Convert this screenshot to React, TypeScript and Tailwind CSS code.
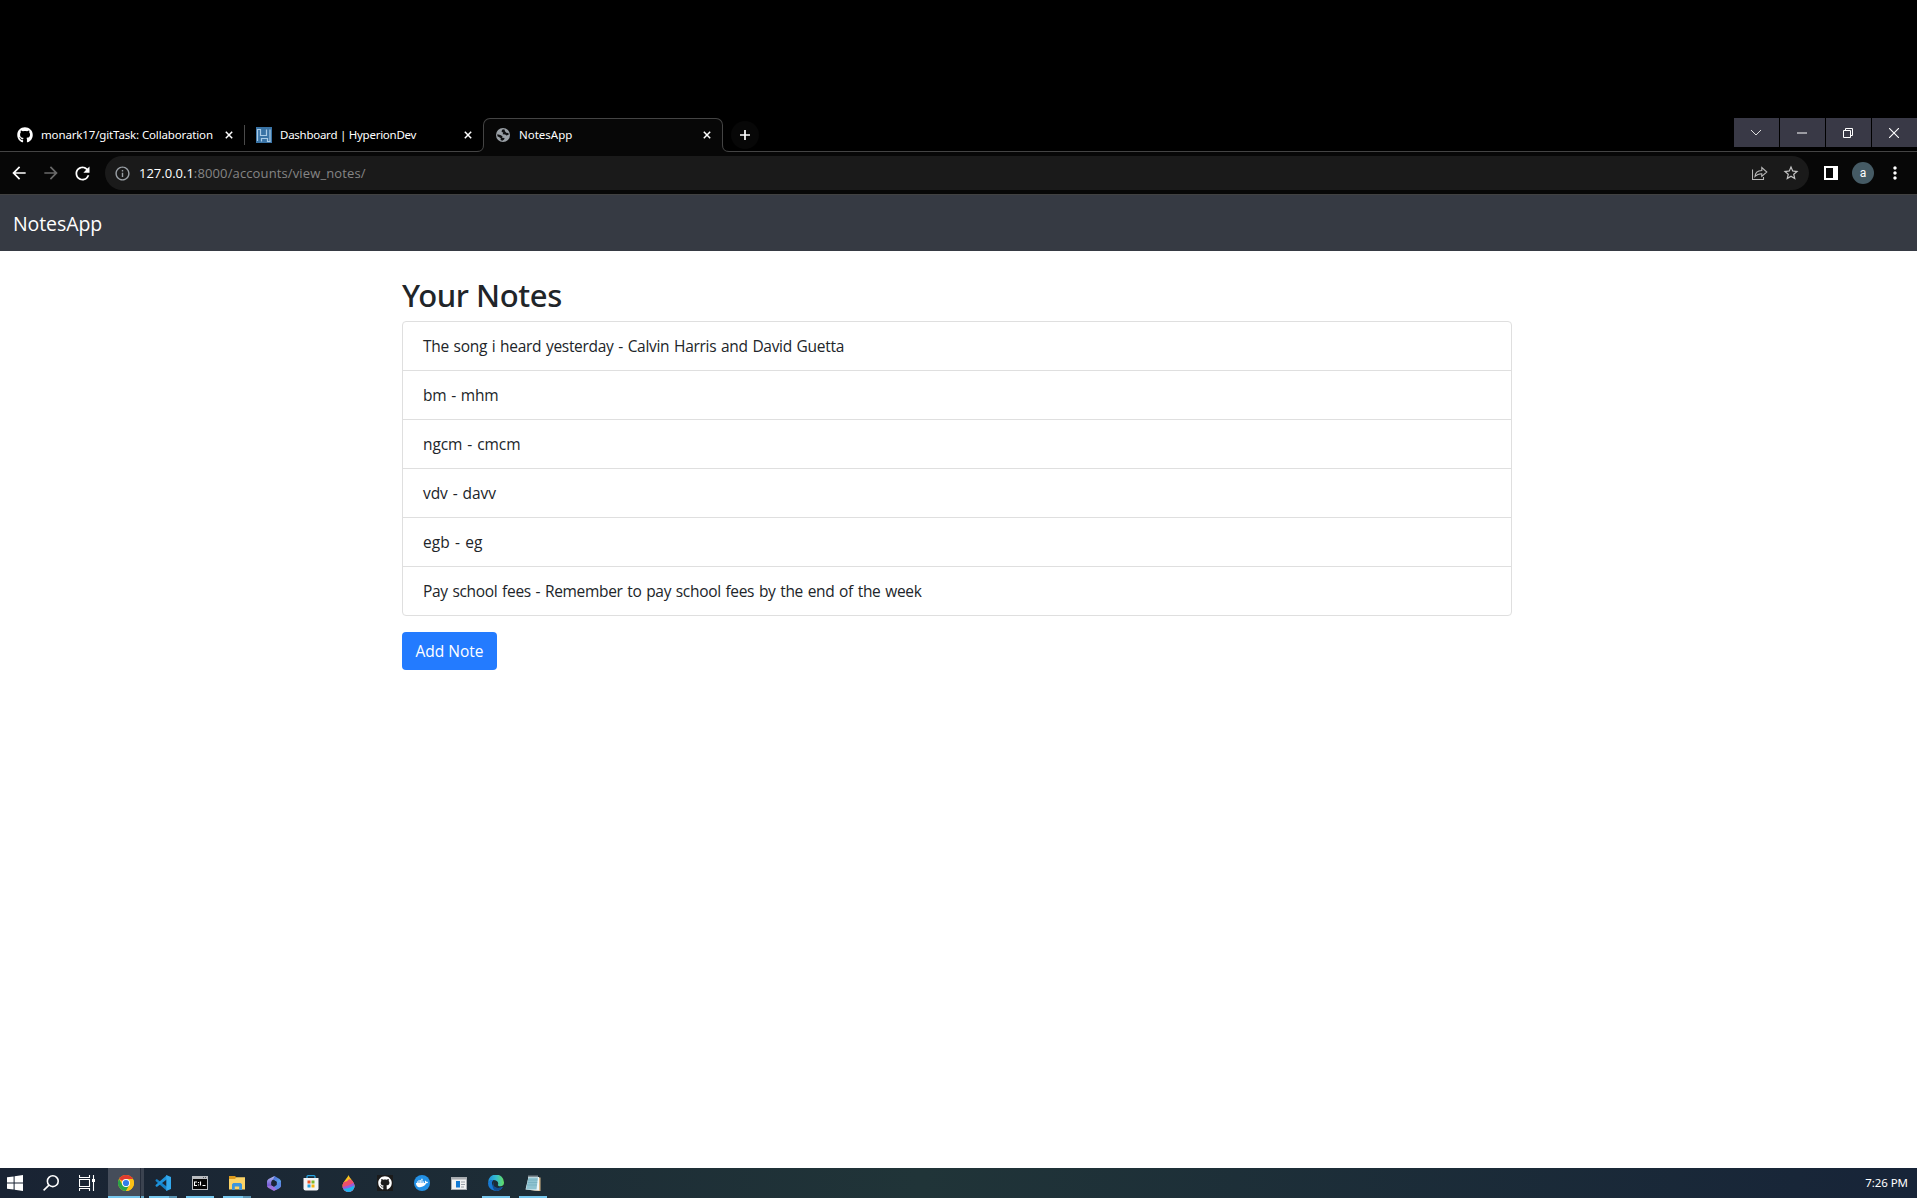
import React from 'react';
import { FaGithub, FaDocker } from 'react-icons/fa';
import {
  MdArrowBack,
  MdArrowForward,
  MdRefresh,
  MdInfoOutline,
  MdStarOutline,
  MdMoreVert,
} from 'react-icons/md';

const notes = [
  { text: 'The song i heard yesterday - Calvin Harris and David Guetta', spacing: 'tracking-[-0.3px]' },
  { text: 'bm - mhm', spacing: 'tracking-[-0.2px]' },
  { text: 'ngcm - cmcm', spacing: 'tracking-[-0.08px]' },
  { text: 'vdv - davv', spacing: 'tracking-[-0.08px]' },
  { text: 'egb - eg', spacing: 'tracking-[0.1px]' },
  {
    text: 'Pay school fees - Remember to pay school fees by the end of the week',
    spacing: 'tracking-[-0.32px]',
  },
];

function CloseX() {
  return (
    <svg width="8" height="8" viewBox="0 0 8 8" className="shrink-0 text-white">
      <path d="M0.8 0.8 7.2 7.2M7.2 0.8 0.8 7.2" stroke="currentColor" strokeWidth="1.5" />
    </svg>
  );
}

function HyperionIcon() {
  return (
    <svg width="16" height="16" viewBox="0 0 16 16" className="shrink-0">
      <rect width="16" height="16" fill="#3973a5" />
      <path
        d="M1.5 14V2.5H4.500V8.500H10.500V2.500M5.500 14.500V11.500H11.500V14.500H14V2.500"
        fill="none"
        stroke="#a9cbe6"
        strokeWidth="1.2"
      />
    </svg>
  );
}

function GlobeIcon() {
  return (
    <svg width="14" height="14" viewBox="0 0 14 14" className="shrink-0">
      <circle cx="7" cy="7" r="7" fill="#9aa0a6" />
      <path
        d="M8.3 1.3 6 1.8 5.6 4 7.3 4.6 6.6 6.2 9.2 6.5 10.4 7.6 12.7 6.8 12.4 5 10.3 4.7 9.2 3.4ZM1.3 6.2 4.4 7 6.5 8.3 6.1 9.8 8.6 10 8.1 11.4 6.3 12.7 4.5 11.9 4.8 10.2 2.9 9.1 1.4 8.2Z"
        fill="#101113"
      />
    </svg>
  );
}

function TabStrip() {
  return (
    <div className="flex h-[34px] bg-black text-white font-['Noto_Sans',sans-serif] text-[11.5px] leading-4">
      <div className="flex h-[34px] w-[483px] border-b border-[#444444]">
        <div className="flex h-[34px] w-[245px] items-center pl-[17px]">
          <FaGithub size={16} className="shrink-0" />
          <span className="ml-2 w-[176px] whitespace-nowrap tracking-[-0.14px]">
            monark17/gitTask: Collaboration
          </span>
          <span className="ml-2 flex">
            <CloseX />
          </span>
          <span className="ml-[11px] h-5 w-px bg-[#4a4a4a]" />
        </div>
        <div className="flex h-[34px] items-center pl-[11px]">
          <HyperionIcon />
          <span className="ml-2 w-[184px] whitespace-nowrap tracking-[-0.26px]">
            Dashboard | HyperionDev
          </span>
          <CloseX />
        </div>
      </div>
      <div className="relative flex h-[34px] w-[240px] items-center rounded-t-[7px] border border-b-0 border-[#444444] bg-[#070707] pb-px pl-3">
        <GlobeIcon />
        <span className="ml-[9px] w-[184px]">NotesApp</span>
        <CloseX />
        <svg width="7" height="7" viewBox="0 0 7 7" className="absolute bottom-0 -left-[7px]">
          <path d="M7 0v7H0V6.5Q6.5 6.5 6.5 0Z" fill="#070707" />
          <path d="M0 6.5Q6.5 6.5 6.5 0" fill="none" stroke="#444444" />
        </svg>
        <svg width="7" height="7" viewBox="0 0 7 7" className="absolute -right-[7px] bottom-0">
          <path d="M0 0v7H7V6.5Q0.5 6.5 0.5 0Z" fill="#070707" />
          <path d="M7 6.5Q0.5 6.5 0.5 0" fill="none" stroke="#444444" />
        </svg>
      </div>
      <div className="flex flex-1 justify-between border-b border-[#444444] pl-2">
        <div className="mt-[3px] flex size-7 items-center justify-center rounded-full bg-[#070707]">
          <svg width="10" height="10" viewBox="0 0 10 10">
            <path d="M5 0V10M0 5H10" stroke="white" strokeWidth="1.7" />
          </svg>
        </div>
        <div className="flex gap-px">
          {windowButtons.map((icon, i) => (
            <div key={i} className="flex h-[29px] w-[45px] items-center bg-[#393946] pl-[17px]">
              {icon}
            </div>
          ))}
        </div>
      </div>
    </div>
  );
}

const windowButtons = [
  <svg width="10" height="10" viewBox="0 0 10 10">
    <path d="M0 2 5 7 10 2" fill="none" stroke="#dddddd" strokeWidth="1" />
  </svg>,
  <svg width="10" height="10" viewBox="0 0 10 10">
    <path d="M0 5H10" stroke="white" strokeWidth="1" />
  </svg>,
  <svg width="10" height="10" viewBox="0 0 10 10">
    <path d="M0.5 2.5H7.5V9.5H0.5ZM2.5 2.5V0.5H9.5V7.5H7.5" fill="none" stroke="white" />
  </svg>,
  <svg width="10" height="10" viewBox="0 0 10 10">
    <path d="M0 0 10 10M10 0 0 10" stroke="white" strokeWidth="1.1" />
  </svg>,
];

function Toolbar() {
  return (
    <div className="flex h-[43px] items-center border-b border-[#414141] bg-[#070707] text-white font-['Open_Sans',sans-serif]">
      <MdArrowBack size={20} className="ml-[9px] shrink-0" />
      <MdArrowForward size={20} className="ml-3 shrink-0 text-[#6a6a6a]" />
      <MdRefresh size={21} className="ml-[11px] shrink-0" />
      <div className="ml-3 flex h-[34px] w-[1704px] items-center rounded-full bg-[#1a1a1a] pl-[9px] text-[13px] leading-5">
        <MdInfoOutline size={17} className="shrink-0 text-[#9aa0a6]" />
        <span className="ml-2">127.0.0.1</span>
        <span className="flex-1 tracking-[0.13px] text-[#858585]">:8000/accounts/view_notes/</span>
        <svg width="16" height="15" viewBox="0 0 16 15" className="mt-px">
          <path
            d="M0.5 3.5V13.5H11.5V11M3 10.5C3.2 6.8 5.5 4.7 9.8 4.5V1.5L14.8 6 9.8 10.4V7.7C6.6 7.6 4.7 8.6 3 10.5Z"
            fill="none"
            stroke="#b8b8b8"
            strokeWidth="1.1"
          />
        </svg>
        <MdStarOutline size={18} className="ml-[14px] mr-[9px] text-[#c4c4c4]" />
      </div>
      <div className="ml-[15px] h-[14px] w-[14px] border-2 border-r-[5px] border-white" />
      <div className="ml-[14px] flex size-[22px] items-center justify-center rounded-full bg-[#455a64] pb-px text-[12px] leading-none text-white font-['Roboto',sans-serif]">
        a
      </div>
      <MdMoreVert size={20} className="ml-[11px] shrink-0" />
    </div>
  );
}

function WindowsIcon() {
  return (
    <svg width="16" height="16" viewBox="0 0 16 16" fill="white">
      <path d="M0 2.3 6.6 1.4V7.5H0ZM7.6 1.2 16 0V7.5H7.6ZM0 8.5H6.6V14.6L0 13.7ZM7.6 8.5H16V16L7.6 14.8Z" />
    </svg>
  );
}

function SearchIcon() {
  return (
    <svg width="16" height="16" viewBox="0 0 16 16">
      <circle cx="9.8" cy="6.2" r="5.4" fill="none" stroke="white" strokeWidth="1.6" />
      <path d="M6 10.2 0.6 15.4" stroke="white" strokeWidth="1.6" />
    </svg>
  );
}

function TaskViewIcon() {
  return (
    <svg width="16" height="16" viewBox="0 0 16 16" fill="none" stroke="white">
      <path d="M0.5 0V2.5H10.5V0M0.5 16V13.5H10.5V16M0.5 4.5H10.5V11.5H0.5ZM14.5 0V16" strokeWidth="1.1" />
      <rect x="13" y="4" width="3" height="3" fill="white" stroke="none" />
    </svg>
  );
}

function ChromeIcon() {
  return (
    <svg width="16" height="16" viewBox="0 0 16 16">
      <circle cx="8" cy="8" r="8" fill="#fbc116" />
      <path d="M8 8 1.07 4A8 8 0 0 1 14.93 4Z" fill="#e33b2e" />
      <path d="M1.07 4A8 8 0 0 0 8 16L11.5 10 4.5 10Z" fill="#2aa34a" />
      <path d="M8 4H14.93A8 8 0 0 1 8 16L11.5 10Z" fill="#fbc116" />
      <circle cx="8" cy="8" r="4" fill="white" />
      <circle cx="8" cy="8" r="3.1" fill="#2f7de9" />
    </svg>
  );
}

function VsCodeIcon() {
  return (
    <svg width="16" height="16" viewBox="0 0 16 16">
      <path d="M0.5 5.1 1.8 4 12 11.7V16L0.6 6.1Z" fill="#1583c9" />
      <path d="M0.5 10.9 1.8 12 12 4.3V0L0.6 9.9Z" fill="#1e93dc" />
      <path d="M11.3 0 16 1.9V14.1L11.3 16Z" fill="#32a9ee" />
    </svg>
  );
}

function CmdIcon() {
  return (
    <svg width="16" height="14" viewBox="0 0 16 14">
      <rect width="16" height="14" fill="#b9bcc0" />
      <path d="M11 1.5H12M13 1.5H14" stroke="#55585e" />
      <rect x="1" y="3" width="14" height="10" fill="#050505" />
      <path d="M5 6H2.500V9.500H5M6.500 6V7M6.500 8.500V9.500M8.500 5.500V9.500M10.500 9.500H13.500" fill="none" stroke="white" strokeWidth="1.1" />
    </svg>
  );
}

function ExplorerIcon() {
  return (
    <svg width="16" height="14" viewBox="0 0 16 14">
      <path d="M0 0H6L7.500 1.500V4H0Z" fill="#dc9a1d" />
      <path d="M0 3H6L7.500 1.300H16V13.500H0Z" fill="#fbd367" />
      <path d="M3 14V8.200L4.300 7H11.700L13 8.200V14H10.200V10.500H5.800V14Z" fill="#3d95dd" />
    </svg>
  );
}

function OfficeIcon() {
  return (
    <svg width="14" height="15" viewBox="0 0 14 15">
      <defs>
        <linearGradient id="office-a" x1="0" y1="0" x2="0" y2="1">
          <stop offset="0" stopColor="#b3bff2" />
          <stop offset="1" stopColor="#6b4bd0" />
        </linearGradient>
        <linearGradient id="office-b" x1="0" y1="0" x2="1" y2="1">
          <stop offset="0" stopColor="#4a5fd0" />
          <stop offset="1" stopColor="#63c4f5" />
        </linearGradient>
      </defs>
      <path d="M7.500 0 1.500 3Q0 4 0 5.500V10.500L4.500 9.500V5.500Q4.500 4.500 5.500 4L9 2Z" fill="url(#office-a)" />
      <path d="M7.500 0 12.500 3Q14 4 14 5.500V10L9.500 8.500V5.500L6 3.800Z" fill="url(#office-b)" />
      <path d="M0 10Q0.500 11.500 1.500 12L7 15 12.500 12Q14 11.300 14 9V8L9.500 8.500 7 10.500 4.500 9.200Z" fill="#9a72dd" />
      <path d="M9.500 7.500V9L7 10.500 9.500 13.700 12.500 12Q14 11 14 9V5.500Z" fill="#5a8ae6" />
      <path d="M7 4.300 9.700 5.900V9L7 10.700 4.300 9V5.900Z" fill="#1a2536" />
    </svg>
  );
}

function StoreIcon() {
  return (
    <svg width="16" height="16" viewBox="0 0 16 16">
      <path d="M4 4V1.500Q4 0.600 5 0.600H11Q12 0.600 12 1.500V4" fill="none" stroke="#27a5e2" strokeWidth="1.200" />
      <path d="M0.500 3H15.500V13.500Q15.500 15.500 13.500 15.500H2.500Q0.500 15.500 0.500 13.500Z" fill="#f3f4f6" />
      <path d="M4.500 5.500H7.500V8.500H4.500Z" fill="#ed5224" />
      <path d="M8.500 5.500H11.500V8.500H8.500Z" fill="#7db82b" />
      <path d="M4.500 9.500H7.500V12.500H4.500Z" fill="#1c9fe0" />
      <path d="M8.500 9.500H11.500V12.500H8.500Z" fill="#f5b40e" />
    </svg>
  );
}

function PaintDropIcon() {
  return (
    <svg width="13" height="17" viewBox="0 0 13 17">
      <defs>
        <clipPath id="drop">
          <path d="M6.500 0C7.500 3.500 12.500 6.500 12.500 11A6 6 0 0 1 0.500 11C0.500 6.500 5.500 3.500 6.500 0Z" />
        </clipPath>
      </defs>
      <g clipPath="url(#drop)">
        <rect width="13" height="17" fill="#f9c31f" />
        <path d="M0 7Q5 7.500 7 4 9 5.500 13 5V17H0Z" fill="#ec4f6c" />
        <path d="M0 12Q6 11.500 13 7V17H0Z" fill="#9a5ad8" />
        <path d="M0 14Q6 14 13 10V17H0Z" fill="#21b4ee" />
      </g>
    </svg>
  );
}

function WindowAppIcon() {
  return (
    <svg width="16" height="13" viewBox="0 0 16 13">
      <rect width="16" height="13" fill="#a8acb0" />
      <rect x="1" y="2.500" width="14" height="9.500" fill="#f2f2f2" />
      <rect x="5" y="4" width="4" height="6.500" fill="#1279d3" />
      <path d="M10 5H14M10 7.500H14M10 10H13" stroke="#9aa0a6" />
    </svg>
  );
}

function EdgeIcon() {
  return (
    <svg width="16" height="16" viewBox="0 0 16 16">
      <defs>
        <linearGradient id="edge-top" x1="0" y1="0.500" x2="1" y2="0.500">
          <stop offset="0" stopColor="#1c8fdd" />
          <stop offset="0.500" stopColor="#35bcd0" />
          <stop offset="1" stopColor="#64e060" />
        </linearGradient>
      </defs>
      <path d="M0 7.500A8 8 0 0 1 16 7.500C16 10 14.500 11.200 12.500 11.200 10.500 11.200 9.500 10.500 10 9.500 11 7 8.500 5 5.500 5 2.500 5 0.500 6.500 0 7.500Z" fill="url(#edge-top)" />
      <path d="M0 8C0.500 5.500 3 4.500 5.500 5 3.500 6.500 3.500 9 5 11 7 13.500 11.500 13.500 14.800 12A8 8 0 0 1 0 8Z" fill="#1779d4" />
      <path d="M6.500 6.500C5 8 5 10.500 7 12 9.500 13.500 12.500 13 14.800 12A8 8 0 0 1 8.500 16C4 15 3.500 8.500 6.500 6.500Z" fill="#124e93" />
    </svg>
  );
}

function NotepadIcon() {
  return (
    <svg width="16" height="17" viewBox="0 0 16 17">
      <path d="M13 2.500H15.500V16H5L14 15Z" fill="#d8b98a" />
      <path d="M3.500 2H14V15.500H10L0.500 14.500Z" fill="#eef6f8" />
      <path d="M3.500 2H13L11.500 14.500H1Z" fill="#8fc3d0" />
      <path d="M3 5H12.500M2.600 7.500H12.300M2.200 10H12" stroke="#6ba7b8" strokeWidth="0.600" />
      <path d="M4 0.500V3M6 0.500V3M8 0.500V3M10 0.500V3M12 0.500V3" stroke="#e3e8ea" strokeWidth="1" />
    </svg>
  );
}

function TaskIcon({ children, line = '' }: { children: React.ReactNode; line?: '' | 'single' | 'double' }) {
  return (
    <div className="flex h-[30px] w-7 flex-col">
      <div className="flex h-7 items-center justify-center pt-0.5">{children}</div>
      {line && (
        <div className="flex h-0.5 bg-[#76c7ee]">
          {line === 'double' && <div className="ml-5 w-2 bg-[#5a94b3]" />}
        </div>
      )}
    </div>
  );
}

function Taskbar() {
  return (
    <div className="flex h-[30px] items-center bg-linear-to-r from-[#192333] via-[#203438] via-48% to-[#172438] text-white">
      <div className="flex w-[108px] items-center gap-5 pl-[7px]">
        <WindowsIcon />
        <SearchIcon />
        <TaskViewIcon />
      </div>
      <div className="flex">
        <div className="flex h-[30px] w-8 flex-col bg-[#454d5a]">
          <div className="flex h-7 items-center pl-2.5 pt-0.5">
            <ChromeIcon />
          </div>
          <div className="h-0.5 bg-[#76c7ee]" />
        </div>
        <div className="flex h-[30px] w-1 flex-col justify-end border-l border-[#242c3a] bg-[#3b4350]">
          <div className="h-0.5 bg-[#62a5c5]" />
        </div>
      </div>
      <div className="ml-[5px] flex gap-[9px]">
        <TaskIcon line="double"><VsCodeIcon /></TaskIcon>
        <TaskIcon line="single"><CmdIcon /></TaskIcon>
        <TaskIcon line="double"><ExplorerIcon /></TaskIcon>
        <TaskIcon><OfficeIcon /></TaskIcon>
        <TaskIcon><StoreIcon /></TaskIcon>
        <TaskIcon><PaintDropIcon /></TaskIcon>
        <TaskIcon>
          <span className="flex size-4 items-center justify-center bg-[#1b1b1b]">
            <FaGithub size={14} />
          </span>
        </TaskIcon>
        <TaskIcon>
          <span className="flex size-4 items-center justify-center rounded-full bg-[#2391e6]">
            <FaDocker size={12} />
          </span>
        </TaskIcon>
        <TaskIcon><WindowAppIcon /></TaskIcon>
        <TaskIcon line="single"><EdgeIcon /></TaskIcon>
        <TaskIcon line="single"><NotepadIcon /></TaskIcon>
      </div>
      <span className="ml-auto pb-px pr-[9px] text-[11.5px] leading-4 tracking-[-0.05px] font-['Noto_Sans',sans-serif]">
        7:26 PM
      </span>
    </div>
  );
}

export default function App() {
  return (
    <div className="flex h-[1198px] w-[1917px] flex-col overflow-hidden bg-black pt-[118px]">
      <TabStrip />
      <Toolbar />
      <main className="flex flex-1 flex-col bg-white font-['Open_Sans',sans-serif] text-[15.5px] leading-6 text-[#212529]">
        <nav className="flex h-14 items-center bg-[#363a43] px-[13px] text-[19.5px] text-white">
          <span className="pt-px tracking-[-0.08px]">NotesApp</span>
        </nav>
        <div className="ml-[402px] w-[1110px] pt-[25px]">
          <h2 className="mb-2 h-[37px] text-[31px] font-medium leading-[38px] tracking-[-0.4px] font-['Noto_Sans',sans-serif]">
            Your Notes
          </h2>
          <ul className="divide-y divide-[#dfdfdf] rounded border border-[#dfdfdf]">
            {notes.map(({ text, spacing }) => (
              <li key={text} className={`h-[49px] px-5 py-3 [word-spacing:1px] last:h-12 ${spacing}`}>
                {text}
              </li>
            ))}
          </ul>
          <button className="mt-4 h-[38px] w-[95px] rounded bg-[#237bff] text-white">Add Note</button>
        </div>
      </main>
      <Taskbar />
    </div>
  );
}
